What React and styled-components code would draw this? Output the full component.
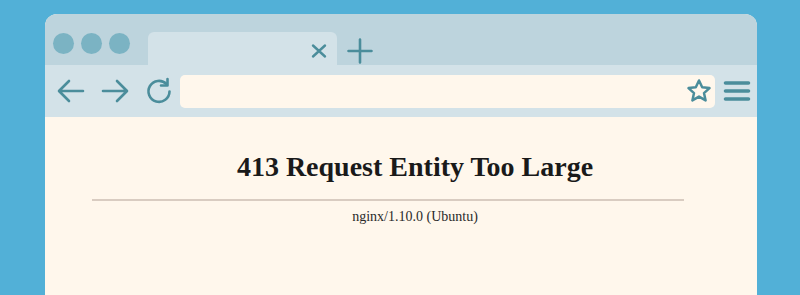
import React from 'react';
import styled, { createGlobalStyle } from 'styled-components';

const GlobalStyle = createGlobalStyle`
  html, body {
    margin: 0;
    padding: 0;
    background: #52b0d7;
    overflow: hidden;
  }
`;

const ICON = '#4b8d9b';

const Page = styled.div`
  width: 800px;
  height: 295px;
  padding: 14px 43px 0 45px;
  box-sizing: border-box;
  display: flex;
`;

const Window = styled.div`
  flex: 1;
  border-radius: 12px 12px 0 0;
  overflow: hidden;
  display: flex;
  flex-direction: column;
  background: #fff7ec;
`;

const TabBar = styled.div`
  height: 51px;
  flex-shrink: 0;
  background: #bdd4dd;
  display: flex;
  align-items: flex-end;
  padding-left: 8px;
  box-sizing: border-box;
`;

const Dots = styled.div`
  display: flex;
  gap: 7px;
  align-self: flex-start;
  margin-top: 19px;
`;

const Dot = styled.span`
  width: 21px;
  height: 21px;
  border-radius: 50%;
  background: #7bb3c3;
`;

const Tab = styled.div`
  width: 189px;
  height: 33px;
  margin-left: 18px;
  background: #d3e2e8;
  border-radius: 6px 6px 0 0;
  display: flex;
  justify-content: flex-end;
  align-items: center;
  padding: 5px 10px 0 0;
  box-sizing: border-box;
`;

const IconButton = styled.span`
  display: flex;
  align-items: center;
  justify-content: center;
  flex-shrink: 0;
  width: ${p => p.$w || 24}px;
  height: ${p => p.$h || 24}px;
  margin-left: ${p => p.$ml || 0}px;
`;

const NewTab = styled(IconButton)`
  margin-bottom: 1px;
`;

const Toolbar = styled.div`
  height: 52px;
  flex-shrink: 0;
  background: #d3e2e8;
  display: flex;
  align-items: center;
  padding: 0 6px 0 12px;
  box-sizing: border-box;
`;

const Address = styled.div`
  flex: 1;
  height: 33px;
  margin: 0 8px 0 7px;
  background: #fff7ec;
  border-radius: 5px;
  display: flex;
  align-items: center;
  justify-content: flex-end;
  padding-right: 3px;
  box-sizing: border-box;
`;

const Content = styled.div`
  flex: 1;
  padding: 34px 0 0 47px;
  font-family: "Liberation Serif", "Times New Roman", serif;
  color: #1a1a1a;
`;

const Column = styled.div`
  width: 646px;
`;

const Title = styled.h1`
  margin: 0;
  font-size: 28px;
  line-height: 32px;
  font-weight: bold;
  text-align: center;
`;

const Rule = styled.div`
  width: 592px;
  height: 2px;
  margin-top: 16px;
  background: #d9ccc1;
`;

const Server = styled.div`
  margin-top: 8px;
  font-size: 14px;
  line-height: 16px;
  text-align: center;
  color: #2a2a2a;
`;

const Svg = ({ w, h, children, sw = 2.6 }) => (
  <svg width={w} height={h} viewBox={`0 0 ${w} ${h}`} fill="none" stroke={ICON}
    strokeWidth={sw} strokeLinecap="round" strokeLinejoin="round">
    {children}
  </svg>
);

export default function App() {
  return (
    <>
      <GlobalStyle />
      <Page>
        <Window>
          <TabBar>
            <Dots>
              <Dot />
              <Dot />
              <Dot />
            </Dots>
            <Tab>
              <IconButton $w={16} $h={16}>
                <Svg w={16} h={16} sw={2.4}>
                  <path d="M2 2.5 L14 13.5 M14 2.5 L2 13.5" />
                </Svg>
              </IconButton>
            </Tab>
            <NewTab $w={26} $h={26} $ml={10}>
              <Svg w={26} h={26} sw={2.6}>
                <path d="M13 1.5 V24.5 M1.5 13 H24.5" />
              </Svg>
            </NewTab>
          </TabBar>
          <Toolbar>
            <IconButton $w={28} $h={24}>
              <Svg w={28} h={24}>
                <path d="M26 12 H3 M12 2 L2 12 L12 22" />
              </Svg>
            </IconButton>
            <IconButton $w={28} $h={24} $ml={16}>
              <Svg w={28} h={24}>
                <path d="M2 12 H25 M16 2 L26 12 L16 22" />
              </Svg>
            </IconButton>
            <IconButton $w={28} $h={28} $ml={16}>
              <Svg w={28} h={28}>
                <path d="M21.5 7 A10.5 10.5 0 1 0 24.5 14.5" />
                <path d="M22.5 2 L22.5 8.5 L16 8.5" />
              </Svg>
            </IconButton>
            <Address>
              <IconButton $w={26} $h={26}>
                <Svg w={26} h={26} sw={2.5}>
                  <path d="M13 2.5 L16.2 9.3 L23.5 10.1 L18 15.1 L19.6 22.4 L13 18.6 L6.4 22.4 L8 15.1 L2.5 10.1 L9.8 9.3 Z" />
                </Svg>
              </IconButton>
            </Address>
            <IconButton $w={28} $h={22}>
              <Svg w={28} h={22} sw={3.6}>
                <path d="M2.5 3 H25.5 M2.5 11 H25.5 M2.5 19 H25.5" />
              </Svg>
            </IconButton>
          </Toolbar>
          <Content>
            <Column>
              <Title>413 Request Entity Too Large</Title>
              <Rule />
              <Server>nginx/1.10.0 (Ubuntu)</Server>
            </Column>
          </Content>
        </Window>
      </Page>
    </>
  );
}
